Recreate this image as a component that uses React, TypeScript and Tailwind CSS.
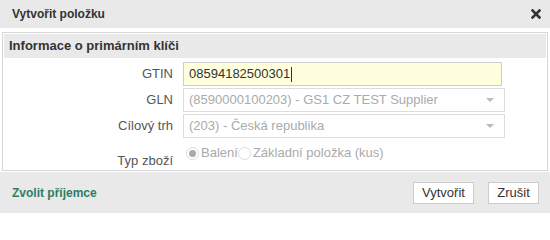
const font = { fontFamily: '"Liberation Sans", Arial, sans-serif' }

function Field({ label, children }: { label: string; children: React.ReactNode }) {
  return (
    <div className="flex items-center h-6 mb-[2px]">
      <span className="w-[179px] pr-[10px] text-right text-[13px] text-[#555]">{label}</span>
      {children}
    </div>
  )
}

function DisabledSelect({ value }: { value: string }) {
  return (
    <div className="flex items-center justify-between w-[322px] h-6 border border-[#ddd] bg-white pl-[5px] pr-[10px] text-[13px] text-[#aaa]">
      <span>{value}</span>
      <span className="w-0 h-0 border-x-[4px] border-x-transparent border-t-[4px] border-t-[#bbb]" />
    </div>
  )
}

function Radio({ checked, label }: { checked?: boolean; label: string }) {
  return (
    <span className="flex items-center text-[13px] text-[#aaa]">
      <span className="flex items-center justify-center w-[13px] h-[13px] rounded-full border border-[#ddd] bg-white mr-[2px]">
        {checked && <span className="w-[7px] h-[7px] rounded-full bg-[#aaa]" />}
      </span>
      {label}
    </span>
  )
}

export default function App() {
  return (
    <div style={font} className="w-[550px] h-[213px] bg-white flex flex-col overflow-hidden">
      {/* Titulek */}
      <div className="h-[28px] bg-[#e9e9e9] flex items-center justify-between pl-3 pr-[9px]">
        <span className="text-[12px] font-bold text-[#333]">Vytvořit položku</span>
        <svg viewBox="0 0 10 10" className="w-[10px] h-[10px]" aria-hidden="true">
          <path d="M1.5 1.5 L8.5 8.5 M8.5 1.5 L1.5 8.5" stroke="#333" strokeWidth={2.6} strokeLinecap="square" />
        </svg>
      </div>

      {/* Formulář */}
      <div className="px-[2px] pt-[4px]">
        <div className="border border-[#d6d6d6] h-[139px] p-px">
          <div className="h-[24px] bg-[#e9e9e9] flex items-center pl-[5px] text-[13px] font-bold text-[#333]">
            Informace o primárním klíči
          </div>
          <div className="pt-[4px]">
            <Field label="GTIN">
              <div className="flex items-center w-[319px] h-6 border border-[#ccc] bg-[#ffffdd] pl-[5px] text-[13px] text-[#333]">
                08594182500301
                <span className="w-px h-[15px] bg-[#333] ml-px" />
              </div>
            </Field>
            <Field label="GLN">
              <DisabledSelect value="(8590000100203) - GS1 CZ TEST Supplier" />
            </Field>
            <Field label="Cílový trh">
              <DisabledSelect value="(203) - Česká republika" />
            </Field>
            <div className="flex h-[26px] mt-[5px]">
              <span className="w-[179px] pr-[10px] text-right text-[13px] text-[#555] pt-[8px]">Typ zboží</span>
              <div className="flex items-center h-[20px] pl-[3px]">
                <Radio checked label="Balení" />
                <Radio label="Základní položka (kus)" />
              </div>
            </div>
          </div>
        </div>
      </div>

      {/* Patička */}
      <div className="flex-1 bg-[#e9e9e9] flex items-center justify-between pl-3 pr-[11px] mt-px">
        <span className="text-[12px] font-bold text-[#2d7d66]">Zvolit příjemce</span>
        <div className="flex gap-[14px]">
          <button className="w-[61px] h-[22px] border border-[#ccc] bg-white text-[13px] text-[#333]">Vytvořit</button>
          <button className="w-[51px] h-[22px] border border-[#ccc] bg-white text-[13px] text-[#333]">Zrušit</button>
        </div>
      </div>
    </div>
  )
}
